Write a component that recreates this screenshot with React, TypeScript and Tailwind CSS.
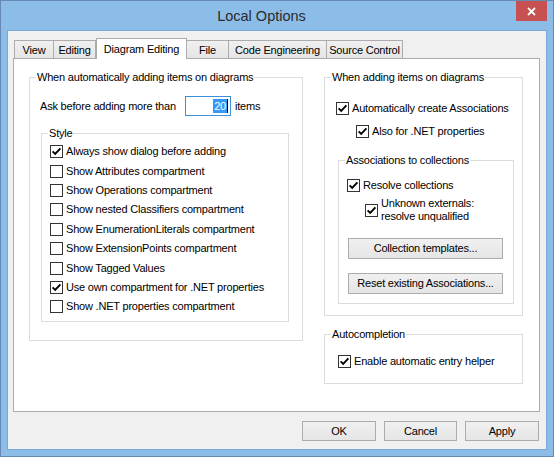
import type { ReactNode } from "react";

const TABS = [
  { label: "View", w: "w-[40px]" },
  { label: "Editing", w: "w-[42px]" },
  { label: "Diagram Editing", w: "w-[91px]", active: true },
  { label: "File", w: "w-[42px]" },
  { label: "Code Engineering", w: "w-[98px]" },
  { label: "Source Control", w: "w-[76px]" },
];

const STYLE_ITEMS = [
  { label: "Always show dialog before adding", checked: true },
  { label: "Show Attributes compartment" },
  { label: "Show Operations compartment" },
  { label: "Show nested Classifiers compartment" },
  { label: "Show EnumerationLiterals compartment" },
  { label: "Show ExtensionPoints compartment" },
  { label: "Show Tagged Values" },
  { label: "Use own compartment for .NET properties", checked: true },
  { label: "Show .NET properties compartment" },
];

function Box({ checked }: { checked?: boolean }) {
  return (
    <span className="flex h-[13px] w-[13px] shrink-0 items-center justify-center border border-[#333333] bg-white">
      {checked && (
        <svg width="11" height="11" viewBox="0 0 11 11">
          <path d="M1.6 5.4 L4.2 8 L9.4 2.4" fill="none" stroke="#000" strokeWidth="1.9" />
        </svg>
      )}
    </span>
  );
}

function Check({ label, checked, className = "" }: { label: ReactNode; checked?: boolean; className?: string }) {
  return (
    <div className={`flex items-center gap-[3px] ${className}`}>
      <Box checked={checked} />
      <span className="leading-[13px]">{label}</span>
    </div>
  );
}

function Group({ title, className = "", children }: { title: string; className?: string; children?: ReactNode }) {
  return (
    <div className={`relative border border-[#dcdcdc] ${className}`}>
      <span className="absolute left-[6px] top-[-8px] bg-white px-[1px] leading-[14px]">{title}</span>
      {children}
    </div>
  );
}

function Button({ label, className = "" }: { label: string; className?: string }) {
  return (
    <div
      className={`flex items-center justify-center border border-[#acacac] bg-gradient-to-b from-[#f0f0f0] to-[#e5e5e5] ${className}`}
    >
      {label}
    </div>
  );
}

export default function App() {
  return (
    <div className="flex h-[457px] w-[554px] flex-col whitespace-nowrap border border-[#6389b4] bg-[#8cbde9] font-['Liberation_Sans',Arial,sans-serif] text-[11px] tracking-[-0.2px] text-black">
      {/* title bar */}
      <div className="flex h-[29px] shrink-0">
        <div className="flex flex-1 items-center justify-center pl-[6px] pt-[2px] text-[14.5px] tracking-normal text-[#2b2b2b]">
          Local Options
        </div>
        <div className="mr-[6px] flex h-[20px] w-[31px] items-center justify-center bg-[#c75050]">
          <svg width="9" height="9" viewBox="0 0 9 9">
            <path d="M1 1 L8 8 M8 1 L1 8" stroke="#fff" strokeWidth="1.8" />
          </svg>
        </div>
      </div>

      {/* client */}
      <div className="ml-[6px] flex h-[420px] w-[540px] flex-col border border-[#7ca8d6] bg-[#f0f0f0] pl-[5px] pt-[7px]">
        {/* tabs */}
        <div className="ml-[1px] flex h-[20px] items-end">
          {TABS.map((t) =>
            t.active ? (
              <div
                key={t.label}
                className={`relative z-10 -mb-[1px] flex h-[21px] items-start justify-center border border-b-0 border-[#acacac] bg-white pt-[2px] ${t.w}`}
              >
                {t.label}
              </div>
            ) : (
              <div
                key={t.label}
                className={`flex h-[18px] items-center justify-center border border-b-0 border-l-0 border-[#acacac] bg-gradient-to-b from-[#f0f0f0] to-[#e5e5e5] pt-[1px] first:border-l ${t.w}`}
              >
                {t.label}
              </div>
            )
          )}
        </div>

        {/* panel */}
        <div className="flex h-[354px] w-[527px] gap-[21px] border border-[#acacac] bg-white pl-[15px] pt-[18px]">
          <Group title="When automatically adding items on diagrams" className="h-[264px] w-[274px]">
            <div className="ml-[10px] mt-[18px] flex h-[20px] items-center">
              <span className="w-[145px]">Ask before adding more than</span>
              <div className="flex h-[20px] w-[46px] items-center justify-end border border-[#3c8fd9] pr-[2px]">
                <span className="bg-[#3399ff] px-[1px] leading-[14px] text-white">20</span>
                <span className="h-[14px] w-[1px] bg-black" />
              </div>
              <span className="ml-[4px]">items</span>
            </div>
            <Group title="Style" className="ml-[11px] mt-[17px] h-[189px] w-[248px]">
              <div className="flex flex-col pl-[8px] pt-[8px]">
                {STYLE_ITEMS.map((it) => (
                  <Check key={it.label} label={it.label} checked={it.checked} className="h-[19.4px]" />
                ))}
              </div>
            </Group>
          </Group>

          <div className="flex w-[199px] flex-col gap-[18px]">
            <Group title="When adding items on diagrams" className="h-[239px]">
              <Check label="Automatically create Associations" checked className="ml-[11px] mt-[24px]" />
              <Check label="Also for .NET properties" checked className="ml-[31px] mt-[10px]" />
              <Group title="Associations to collections" className="ml-[13px] mt-[22px] h-[144px] w-[176px]">
                <Check label="Resolve collections" checked className="ml-[8px] mt-[18px]" />
                <Check
                  label={
                    <>
                      Unknown externals:
                      <br />
                      resolve unqualified
                    </>
                  }
                  checked
                  className="ml-[26px] mt-[5px]"
                />
                <Button label="Collection templates..." className="ml-[9px] mt-[15px] h-[21px] w-[155px]" />
                <Button label="Reset existing Associations..." className="ml-[9px] mt-[14px] h-[21px] w-[155px]" />
              </Group>
            </Group>
            <Group title="Autocompletion" className="h-[50px]">
              <Check label="Enable automatic entry helper" checked className="ml-[13px] mt-[20px]" />
            </Group>
          </div>
        </div>

        {/* dialog buttons */}
        <div className="mr-[7px] mt-[9px] flex justify-end gap-[8px]">
          <Button label="OK" className="h-[20px] w-[74px] border-[#3c7fb1]" />
          <Button label="Cancel" className="h-[20px] w-[73px]" />
          <Button label="Apply" className="h-[20px] w-[74px]" />
        </div>
      </div>
    </div>
  );
}
